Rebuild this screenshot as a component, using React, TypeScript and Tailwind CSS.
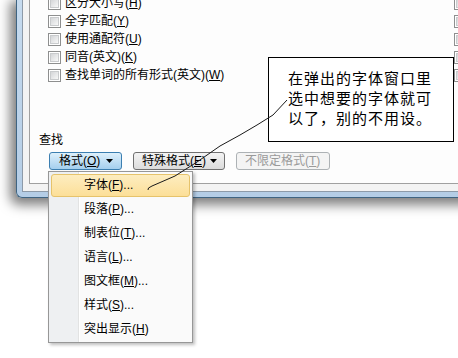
const rows: [string, string][] = [
  ['区分大小写', 'H'],
  ['全字匹配', 'Y'],
  ['使用通配符', 'U'],
  ['同音(英文)', 'K'],
  ['查找单词的所有形式(英文)', 'W'],
];

const menuItems: [string, string, string][] = [
  ['字体', 'F', '...'],
  ['段落', 'P', '...'],
  ['制表位', 'T', '...'],
  ['语言', 'L', '...'],
  ['图文框', 'M', '...'],
  ['样式', 'S', '...'],
  ['突出显示', 'H', ''],
];

function CheckBox() {
  return (
    <span className="flex h-[13px] w-[13px] shrink-0 items-center justify-center border border-[#8e8f8f] bg-white">
      <span className="h-[9px] w-[9px] border border-[#c9cbcd] bg-gradient-to-br from-[#d4d6d8] to-[#f8f8f8]" />
    </span>
  );
}

function Arrow({ color = '#000' }: { color?: string }) {
  return (
    <svg width="7" height="4" viewBox="0 0 7 4" className="shrink-0">
      <path d="M0 0h7L3.5 4z" fill={color} />
    </svg>
  );
}

export default function App() {
  return (
    <div className="relative h-[358px] w-[458px] overflow-hidden bg-white font-['Liberation_Sans','Noto_Sans_CJK_SC',sans-serif] text-[12px] text-black">
      {/* window */}
      <div className="ml-[16px] w-[470px] rounded-bl-[6px] border-b border-l border-[#3f6482] bg-gradient-to-b from-[#c6dbef] to-[#b4cde6] pb-[5px] pl-[5px] shadow-[-3px_4px_12px_3px_rgba(0,0,0,0.5)]">
        <div className="border-b border-l border-[#8d9aa8] bg-[#f3f3f3] pb-[7px] pl-[6px]">
          <div className="flex h-[184px] flex-col overflow-hidden border-b border-l border-[#a0a0a0] bg-[#fdfdfd]">
            <div className="-mt-[6px] flex pl-[18px]">
              <div className="flex w-[406px] flex-col">
                {rows.map(([label, key]) => (
                  <div key={key} className="flex h-[18px] items-center gap-[4px]">
                    <CheckBox />
                    <span className="whitespace-nowrap leading-[16px]">
                      {label}(<span className="underline">{key}</span>)
                    </span>
                  </div>
                ))}
              </div>
              <div className="flex flex-col">
                {rows.map(([, key]) => (
                  <div key={key} className="flex h-[18px] items-center">
                    <CheckBox />
                  </div>
                ))}
              </div>
            </div>

            <div className="mt-[48px] pl-[9px] leading-[16px]">查找</div>

            <div className="mt-[4px] flex items-center pl-[19px]">
              <div className="flex h-[18px] w-[73px] items-center justify-between rounded-[3px] border border-[#3c7fb1] bg-gradient-to-b from-[#def0fb] to-[#a4cfee] pl-[9px] pr-[8px] leading-[16px]">
                <span>
                  格式(<span className="underline">O</span>)
                </span>
                <Arrow />
              </div>
              <div className="ml-[11px] flex h-[18px] w-[92px] items-center justify-between rounded-[3px] border border-[#707070] bg-gradient-to-b from-[#f4f4f4] to-[#dcdcdc] pl-[8px] pr-[7px] leading-[16px]">
                <span>
                  特殊格式(<span className="underline">E</span>)
                </span>
                <Arrow />
              </div>
              <div className="ml-[11px] flex h-[18px] w-[94px] items-center rounded-[3px] border border-[#adb2b5] bg-[#f4f4f4] pl-[8px] leading-[16px] text-[#9a9a9a]">
                不限定格式(<span className="underline">T</span>)
              </div>
            </div>
          </div>
        </div>
      </div>

      {/* dropdown menu */}
      <div className="absolute left-[48px] top-[171px] flex w-[145px] flex-col border border-[#979797] bg-[linear-gradient(to_right,#eef0f2_0px,#eef0f2_29px,#e2e3e3_29px,#e2e3e3_30px,#ffffff_30px,#ffffff_31px,#fafafa_31px)] py-[1px] shadow-[2px_2px_3px_rgba(0,0,0,0.25)]">
        {menuItems.map(([label, key, dots], i) => (
          <div key={key + label} className="flex h-[24px] items-center px-[2px]">
            <div
              className={
                i === 0
                  ? 'flex h-[23px] w-full items-center rounded-[3px] border border-[#e6c36b] bg-gradient-to-b from-[#fdedc0] to-[#fcdf98] pl-[32px]'
                  : 'flex h-[23px] w-full items-center pl-[33px]'
              }
            >
              <span className="whitespace-nowrap leading-[16px]">
                {label}(<span className="underline">{key}</span>){dots}
              </span>
            </div>
          </div>
        ))}
      </div>

      {/* callout */}
      <div className="absolute left-[268px] top-[57px] h-[85px] w-[186px] border border-black bg-white pl-[19px] pt-[10px] font-['Noto_Sans_CJK_SC',sans-serif] text-[15px] leading-[20px] tracking-[1px]">
        <div className="whitespace-nowrap">在弹出的字体窗口里</div>
        <div className="whitespace-nowrap">选中想要的字体就可</div>
        <div className="whitespace-nowrap">以了，别的不用设。</div>
      </div>

      {/* leader line */}
      <svg className="pointer-events-none absolute left-0 top-0" width="458" height="358" viewBox="0 0 458 358">
        <path
          d="M287 100 L273 115 L257 125 L240 135 L220 146 L197 162 L175 176 L152 186 Q147 188 148 190"
          fill="none"
          stroke="#1a1a1a"
          strokeWidth="1"
        />
      </svg>
    </div>
  );
}
